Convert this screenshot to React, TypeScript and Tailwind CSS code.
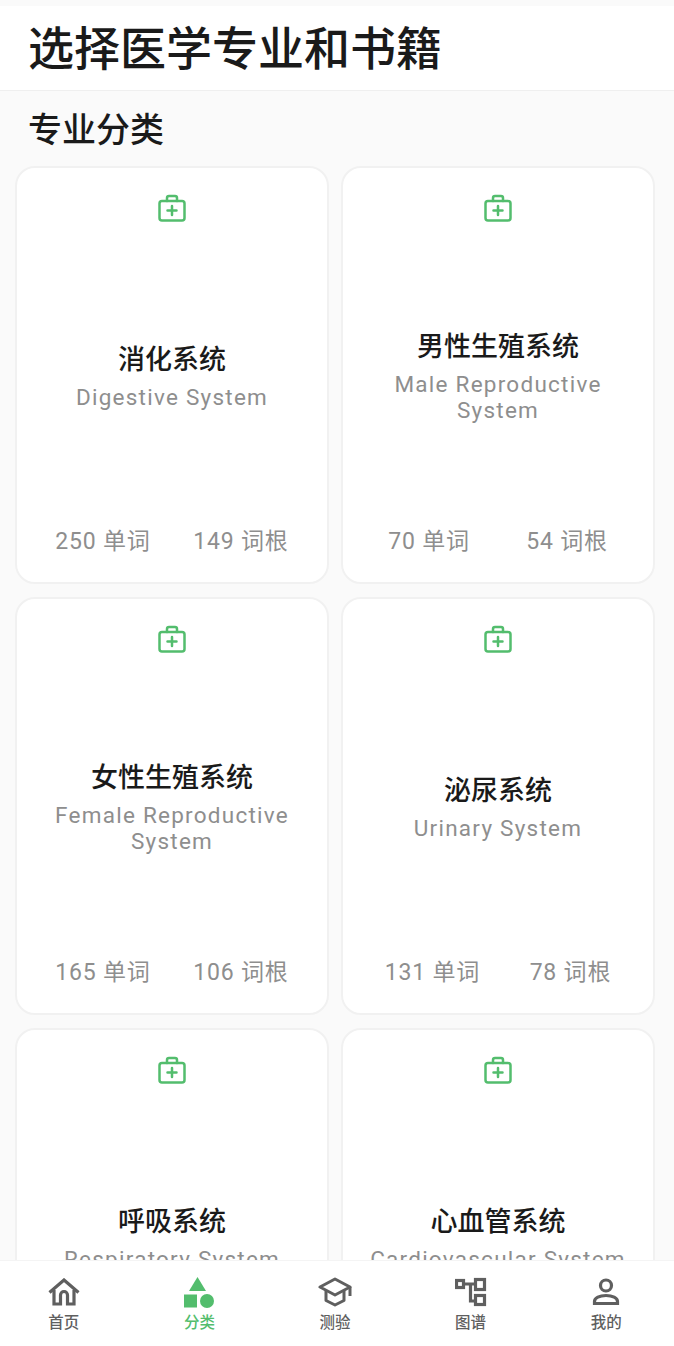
import React from 'react';

const CJK = "font-['Roboto','Noto_Sans_CJK_SC',sans-serif]";

const systems = [
  { zh: '消化系统', en: 'Digestive System', words: 250, roots: 149 },
  { zh: '男性生殖系统', en: 'Male Reproductive System', words: 70, roots: 54 },
  { zh: '女性生殖系统', en: 'Female Reproductive System', words: 165, roots: 106 },
  { zh: '泌尿系统', en: 'Urinary System', words: 131, roots: 78 },
  { zh: '呼吸系统', en: 'Respiratory System' },
  { zh: '心血管系统', en: 'Cardiovascular System' },
];

const MedicalIcon = () => (
  <svg width="28" height="28" viewBox="0 0 28 28" fill="none" stroke="#53bd6d" strokeWidth="2.5" strokeLinejoin="round" strokeLinecap="round">
    <rect x="1.500" y="7" width="25" height="19.500" rx="2.500" />
    <path d="M9 7V4A2 2 0 0 1 11 2h6a2 2 0 0 1 2 2v3" />
    <path d="M14 12v9M9.500 16.500h9" />
  </svg>
);

const HomeIcon = () => (
  <svg width="32" height="28" viewBox="0 0 32 28" fill="none" stroke="#5f5f5f" strokeWidth="3.200">
    <path d="M1.500 14.500 16 2 30.500 14.500" />
    <path d="M6 12v14h6.500v-9a3.500 3.500 0 0 1 7 0v9H26V12" />
  </svg>
);

const CategoryIcon = () => (
  <svg width="30" height="31" viewBox="0 0 30 31" fill="#53bd6d">
    <path d="M13.500 0 22 14H5Z" />
    <rect x="0" y="17.500" width="13" height="13" />
    <circle cx="23" cy="24" r="7" />
  </svg>
);

const QuizIcon = () => (
  <svg width="34" height="30" viewBox="0 0 34 30" fill="none" stroke="#5f5f5f" strokeWidth="3" strokeLinejoin="round">
    <path d="M17 2 32 10 17 18 2 10Z" />
    <path d="M8 14v9.500L17 28l9-4.500V14" />
    <path d="M32 10v9" />
  </svg>
);

const GraphIcon = () => (
  <svg width="32" height="30" viewBox="0 0 32 30" fill="none" stroke="#5f5f5f" strokeWidth="3.200">
    <rect x="1.500" y="3.500" width="7" height="7" />
    <rect x="20.500" y="2.500" width="9" height="10" />
    <rect x="20.500" y="18.500" width="9" height="9" />
    <path d="M9 7h11M15.500 7v17H20" />
  </svg>
);

const UserIcon = () => (
  <svg width="28" height="28" viewBox="0 0 28 28" fill="none" stroke="#5f5f5f" strokeWidth="3.200">
    <circle cx="14" cy="7.500" r="5.500" />
    <path d="M2.500 25.500v-2c0-3.500 5-6 11.500-6s11.500 2.500 11.500 6v2Z" />
  </svg>
);

const tabs = [
  { label: '首页', icon: <HomeIcon />, active: false },
  { label: '分类', icon: <CategoryIcon />, active: true },
  { label: '测验', icon: <QuizIcon />, active: false },
  { label: '图谱', icon: <GraphIcon />, active: false },
  { label: '我的', icon: <UserIcon />, active: false },
];

const App: React.FC = () => {
  return (
    <div className={`h-[1346px] w-[674px] flex flex-col overflow-hidden bg-[#fafafa] ${CJK}`}>
      {/* Header */}
      <div className="mt-[6px] h-[85px] shrink-0 bg-white border-b border-[#efefef] pl-[28px] flex items-center">
        <h1 className="text-[46px] leading-none font-medium text-[#1a1a1a] mt-[1px]">选择医学专业和书籍</h1>
      </div>

      <div className="flex-1 min-h-0 overflow-hidden">
        <h2 className="pl-[28px] mt-[19px] mb-[16px] text-[34px] leading-[40px] font-medium text-[#1a1a1a]">专业分类</h2>

        {/* Category grid */}
        <div className="grid grid-cols-[314px_314px] gap-x-[12px] gap-y-[13px] pl-[15px]">
          {systems.map((s) => (
            <div key={s.zh} className="h-[418px] bg-white rounded-[20px] border-2 border-[#f1f1f1] flex flex-col items-center pt-[25.500px] pb-[24px]">
              <MedicalIcon />
              <div className="flex-1 flex flex-col items-center justify-center pt-[3px] px-[16px] text-center">
                <div className="text-[27px] leading-[40px] font-medium text-[#1a1a1a]">{s.zh}</div>
                <div className="text-[22.500px] leading-[25.500px] mt-[5px] tracking-[1.250px] text-[#8e8e8e]">{s.en}</div>
              </div>
              <div className="w-full h-[32px] flex justify-around px-[17px] text-[23px] leading-[32px] tracking-[0.800px] text-[#8e8e8e]">
                {s.words !== undefined && <span>{s.words} 单词</span>}
                {s.roots !== undefined && <span>{s.roots} 词根</span>}
              </div>
            </div>
          ))}
        </div>
      </div>

      {/* Bottom tab bar */}
      <div className="h-[86px] shrink-0 bg-white border-t border-[#f4f4f4] overflow-hidden">
        <div className="w-[678px] -ml-[4px] grid grid-cols-5">
          {tabs.map((t) => (
            <div key={t.label} className="flex flex-col items-center pt-[14px]">
              <div className="h-[34px] flex items-center justify-center">{t.icon}</div>
              <span className={`mt-[3px] text-[15.500px] leading-[22px] font-medium ${t.active ? 'text-[#53bd6d]' : 'text-[#5f5f5f]'}`}>{t.label}</span>
            </div>
          ))}
        </div>
      </div>
    </div>
  );
};

export default App;
